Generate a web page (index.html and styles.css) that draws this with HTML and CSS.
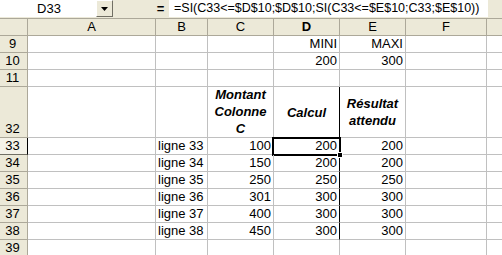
FILE: index.html
```html
<!DOCTYPE html>
<html>
<head>
<meta charset="utf-8">
<link rel="stylesheet" href="styles.css">
</head>
<body>
<div class="fbar">
  <div class="namebox">D33</div>
  <div class="dd"><svg width="7" height="4" viewBox="0 0 7 4"><path d="M0 0H7L3.5 4Z" fill="#000"/></svg></div>
  <div class="gap"></div>
  <div class="eq">=</div>
  <div class="formula">=SI(C33&lt;=$D$10;$D$10;SI(C33&lt;=$E$10;C33;$E$10))</div>
</div>
<div class="sheet">
  <div class="h corner"></div><div class="h">A</div><div class="h">B</div><div class="h">C</div><div class="h sel">D</div><div class="h">E</div><div class="h">F</div><div class="h last"></div>

  <div class="rh">9</div><div class="c"></div><div class="c"></div><div class="c"></div><div class="c r">MINI</div><div class="c r">MAXI</div><div class="c"></div><div class="c last"></div>
  <div class="rh">10</div><div class="c"></div><div class="c"></div><div class="c"></div><div class="c r">200</div><div class="c r">300</div><div class="c"></div><div class="c last"></div>
  <div class="rh">11</div><div class="c"></div><div class="c"></div><div class="c"></div><div class="c"></div><div class="c"></div><div class="c"></div><div class="c last"></div>
  <div class="rh tall">32</div><div class="c"></div><div class="c"></div><div class="c t bottom">Montant<br>Colonne<br>C</div><div class="c t mid rb">Calcul</div><div class="c t mid">Résultat<br>attendu</div><div class="c"></div><div class="c last"></div>
  <div class="rh selr">33</div><div class="c"></div><div class="c l">ligne 33</div><div class="c r">100</div><div class="c r rb active">200<span class="handle"></span></div><div class="c r">200</div><div class="c"></div><div class="c last"></div>
  <div class="rh">34</div><div class="c"></div><div class="c l">ligne 34</div><div class="c r">150</div><div class="c r rb">200</div><div class="c r">200</div><div class="c"></div><div class="c last"></div>
  <div class="rh">35</div><div class="c"></div><div class="c l">ligne 35</div><div class="c r">250</div><div class="c r rb">250</div><div class="c r">250</div><div class="c"></div><div class="c last"></div>
  <div class="rh">36</div><div class="c"></div><div class="c l">ligne 36</div><div class="c r">301</div><div class="c r rb">300</div><div class="c r">300</div><div class="c"></div><div class="c last"></div>
  <div class="rh">37</div><div class="c"></div><div class="c l">ligne 37</div><div class="c r">400</div><div class="c r rb">300</div><div class="c r">300</div><div class="c"></div><div class="c last"></div>
  <div class="rh">38</div><div class="c"></div><div class="c l">ligne 38</div><div class="c r">450</div><div class="c r rb">300</div><div class="c r">300</div><div class="c"></div><div class="c last"></div>
  <div class="rh">39</div><div class="c"></div><div class="c"></div><div class="c"></div><div class="c"></div><div class="c"></div><div class="c"></div><div class="c last"></div>
</div>
</body>
</html>
```
FILE: styles.css
```css
* { box-sizing: border-box; }
html, body { margin: 0; padding: 0; }
body {
  width: 502px;
  height: 255px;
  overflow: hidden;
  background: #ece9d8;
  font-family: "Liberation Sans", Arial, sans-serif;
  font-size: 13px;
  color: #000;
}
.fbar {
  display: flex;
  height: 19px;
  padding-bottom: 2px;
  background: #ece9d8;
  border-bottom: 1px solid #aca899;
}
.namebox {
  width: 96px;
  height: 17px;
  background: #fff;
  text-align: center;
  line-height: 17px;
  padding-left: 2px;
}
.dd {
  width: 17px;
  height: 17px;
  background: #ece9d8;
  border-top: 1px solid #fff;
  border-left: 1px solid #fff;
  border-right: 1px solid #716f64;
  border-bottom: 1px solid #716f64;
  display: flex;
  align-items: center;
  justify-content: center;
}
.gap { width: 41px; }
.eq {
  width: 13px;
  font-weight: bold;
  line-height: 17px;
  text-align: center;
}
.formula {
  margin-left: 2px;
  width: 319px;
  height: 17px;
  background: #fff;
  line-height: 17px;
  padding-left: 5px;
  font-size: 12.5px;
  white-space: nowrap;
  overflow: hidden;
}
.sheet {
  display: grid;
  grid-template-columns: 28px 128px 52px 66px 66px 66px 81px 1fr;
  grid-template-rows: 17px 17px 17px 17px 51px 17px 17px 17px 17px 17px 17px 17px;
  background: #fff;
}
.h {
  background: #ece9d8;
  border-right: 1px solid #aca899;
  border-bottom: 1px solid #aca899;
  text-align: center;
  line-height: 16px;
}
.h.sel { font-weight: bold; }
.h.last { border-right: none; }
.rh {
  background: #ece9d8;
  border-right: 1px solid #aca899;
  border-bottom: 1px solid #aca899;
  text-align: center;
  line-height: 16px;
  padding-right: 2px;
}
.rh.tall {
  display: flex;
  align-items: flex-end;
  justify-content: center;
  line-height: 16px;
}
.rh.selr {
  border-right: 1px solid #000;
  border-bottom: 1px solid #716f64;
  background: #f4f2e8;
}
.c {
  border-right: 1px solid #c0c0c0;
  border-bottom: 1px solid #c0c0c0;
  line-height: 16px;
  white-space: nowrap;
  position: relative;
}
.c.last { border-right: none; }
.c.r { text-align: right; padding-right: 2px; }
.c.l { text-align: left; padding-left: 2px; }
.c.rb { border-right: 1px solid #000; }
.c.t {
  font-weight: bold;
  font-style: italic;
  text-align: center;
  display: flex;
  justify-content: center;
  line-height: 17px;
}
.c.bottom { align-items: flex-end; padding-bottom: 0; }
.c.mid { align-items: center; }
.c.active::after {
  content: "";
  position: absolute;
  left: -2px;
  top: -1px;
  right: -2px;
  bottom: -2px;
  border: 2px solid #000;
  pointer-events: none;
}
.handle {
  position: absolute;
  right: -4px;
  bottom: -4px;
  width: 6px;
  height: 6px;
  background: #000;
  border: 1px solid #fff;
  z-index: 2;
}
```
